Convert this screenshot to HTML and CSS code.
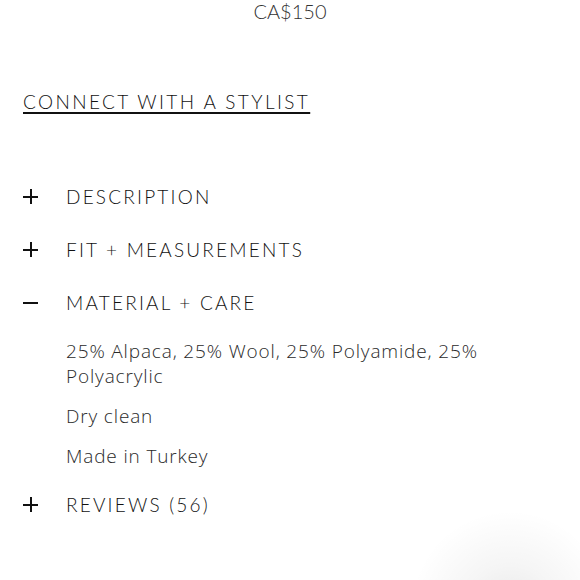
FILE: index.html
```html
<!DOCTYPE html>
<html>
<head>
<meta charset="utf-8">
<link rel="stylesheet" href="styles.css">
</head>
<body>
<div class="page">
  <div class="price">CA$150</div>
  <a class="stylist" href="#">CONNECT WITH A STYLIST</a>
  <div class="accordion">
    <div class="item">
      <div class="head"><span class="icon plus"></span><span class="title">DESCRIPTION</span></div>
    </div>
    <div class="item">
      <div class="head"><span class="icon plus"></span><span class="title">FIT + MEASUREMENTS</span></div>
    </div>
    <div class="item open">
      <div class="head"><span class="icon minus"></span><span class="title">MATERIAL + CARE</span></div>
      <div class="body">
        <p>25% Alpaca, 25% Wool, 25% Polyamide, 25% Polyacrylic</p>
        <p>Dry clean</p>
        <p>Made in Turkey</p>
      </div>
    </div>
    <div class="item">
      <div class="head"><span class="icon plus"></span><span class="title">REVIEWS (56)</span></div>
    </div>
  </div>
</div>
<div class="fab-shadow"></div>
</body>
</html>
```
FILE: styles.css
```css
html, body {
  margin: 0;
  padding: 0;
  background: #fff;
  overflow: hidden;
}
body {
  font-family: Lato, "Noto Sans", sans-serif;
  color: #111;
  width: 580px;
  height: 580px;
  position: relative;
}
.page {
  padding: 0 23px;
}
.price {
  text-align: center;
  font-size: 20px;
  line-height: 21px;
  padding-top: 1px;
  color: #333;
  font-weight: 300;
}
.stylist {
  display: inline-block;
  margin-top: 68px;
  font-size: 19px;
  line-height: 24px;
  letter-spacing: 2.4px;
  color: #111;
  font-weight: 300;
  text-decoration: underline;
  text-decoration-thickness: 2px;
  text-underline-offset: 3px;
}
.accordion {
  margin-top: 56px;
}
.head {
  display: flex;
  align-items: center;
  height: 53px;
}
.icon {
  position: relative;
  width: 15px;
  height: 15px;
  margin-right: 28px;
  flex: none;
}
.icon::before, .plus::after {
  content: "";
  position: absolute;
  background: #111;
}
.icon::before {
  left: 0;
  top: 7px;
  width: 15px;
  height: 1.5px;
}
.plus::after {
  left: 7px;
  top: 0;
  width: 1.5px;
  height: 15px;
}
.title {
  font-size: 19px;
  letter-spacing: 2.2px;
  font-weight: 300;
  color: #111;
}
.body {
  padding: 10px 60px 9px 43px;
}
.body p {
  margin: 0 0 15px;
  font-family: "Open Sans", Lato, sans-serif;
  font-size: 19px;
  line-height: 25px;
  letter-spacing: 0.85px;
  font-weight: 300;
  color: #2a2a2a;
}
.body p:last-child {
  margin-bottom: 0;
}
.fab-shadow {
  position: absolute;
  left: 400px;
  top: 500px;
  width: 180px;
  height: 80px;
  background: radial-gradient(circle at 110px 110px, rgba(0,0,0,0.09) 0, rgba(0,0,0,0.04) 45px, rgba(0,0,0,0) 100px);
}
```
